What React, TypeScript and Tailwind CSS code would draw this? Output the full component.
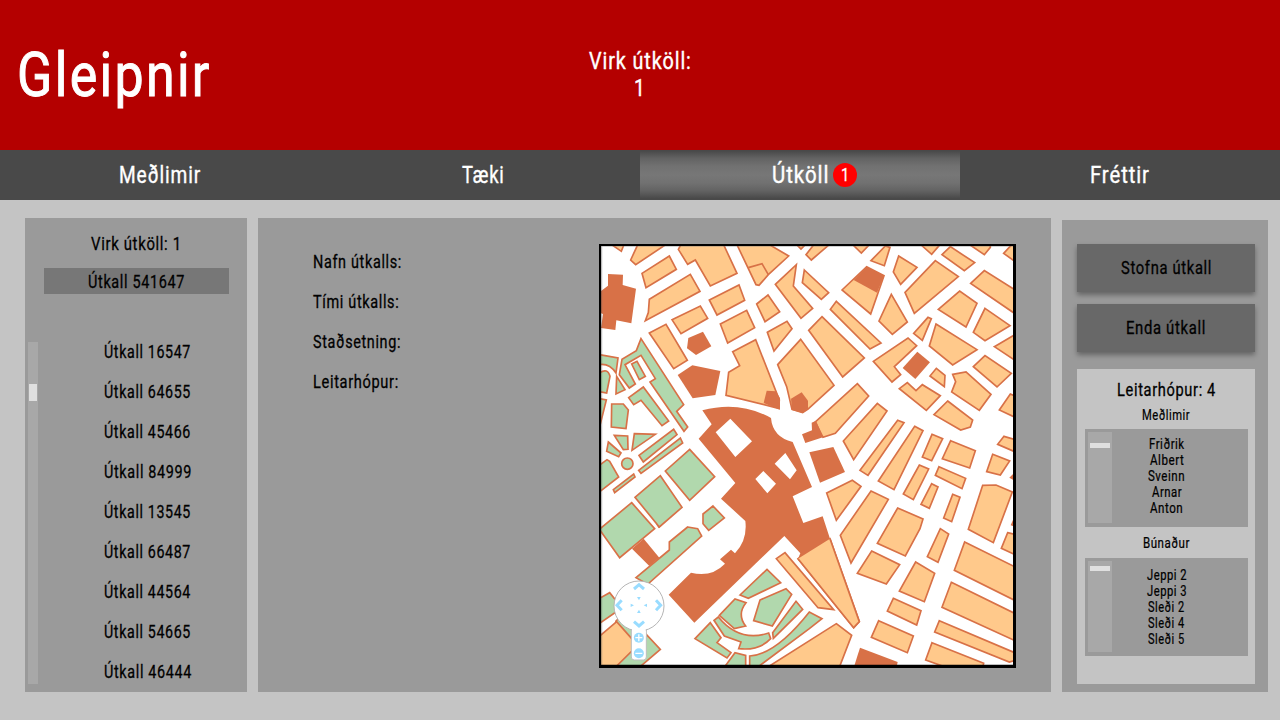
import { useLayoutEffect, useRef } from "react";

/** Condensed label: squeezes its text horizontally to a given width. */
function Label({ text, w, className = "" }: { text: string; w: number; className?: string }) {
  const ref = useRef<HTMLSpanElement>(null);
  useLayoutEffect(() => {
    const el = ref.current;
    if (el) el.style.transform = `scaleX(${w / el.offsetWidth})`;
  }, [text, w]);
  return (
    <span className={`inline-flex shrink-0 ${className}`} style={{ width: w }}>
      <span
        ref={ref}
        className="inline-block origin-left shrink-0 whitespace-pre tracking-[0.045em] [-webkit-text-stroke:0.016em_currentColor]"
      >
        {text}
      </span>
    </span>
  );
}

const calls: [string, number][] = [
  ["Útkall 16547", 87],
  ["Útkall 64655", 87],
  ["Útkall 45466", 87],
  ["Útkall 84999", 88],
  ["Útkall 13545", 87],
  ["Útkall 66487", 87],
  ["Útkall 44564", 87],
  ["Útkall 54665", 87],
  ["Útkall 46444", 88],
];

const fields: [string, number][] = [
  ["Nafn útkalls:", 89],
  ["Tími útkalls:", 86],
  ["Staðsetning:", 88],
  ["Leitarhópur:", 86],
];

const members: [string, number][] = [
  ["Friðrik", 36],
  ["Albert", 34],
  ["Sveinn", 37],
  ["Arnar", 30],
  ["Anton", 33],
];

const gear: [string, number][] = [
  ["Jeppi 2", 40],
  ["Jeppi 3", 40],
  ["Sleði 2", 37],
  ["Sleði 4", 37],
  ["Sleði 5", 37],
];

const P = ({ d, fill }: { d: string; fill?: string }) => <polygon points={d} fill={fill} />;

const orangeNW = [
  "38,8 76,34 86,8",
  "128,8 104,60 119,74 212,12",
  "138,100 220,48 241,88 150,143",
  "160,178 283,103 312,154 148,242 157,218",
  "247,28 258,8 380,8 423,100 343,138 298,60 275,73",
  "420,8 480,134 489,136 517,104 578,48 510,8",
  "340,180 429,135 446,181 363,225",
  "228,239 313,198 335,235 255,281",
  "160,279 210,253 274,361 233,386",
  "373,252 452,211 476,263 395,309",
  "482,192 516,165 551,215 507,245",
  "514,277 573,244 588,266 534,333",
  "538,133 601,74 592,138 650,205 615,235",
  "625,90 698,158 676,178 619,128",
  "598,10 615,27 632,10",
  "630,44 646,60 702,12 655,12",
  "545,374 614,298 714,436 636,507 620,518 588,508 572,440",
  "410,335 479,299 550,480 548,505 390,466 398,397 431,377",
];

const orangeNE = [
  "138,12 166,39 192,12",
  "195,62 238,18 252,22 235,77",
  "278,48 333,82 284,133 262,96",
  "388,62 457,110 325,220 297,157",
  "342,12 377,43 402,14",
  "408,44 433,20 506,68 475,92",
  "488,12 535,44 553,22 553,12",
  "593,40 615,16 640,4 640,74",
  "494,130 535,92 640,158 640,230",
  "397,208 461,153 513,190 480,261",
  "537,205 612,257 537,302 502,277",
  "565,320 640,276 640,370",
  "390,252 513,329 440,375 370,318",
  "502,380 537,347 616,400 573,441",
  "256,163 304,246 259,283 219,243",
  "366,232 376,236 349,301 323,280",
  "202,364 306,294 332,317 265,380 284,404 258,426",
  "391,385 417,406 415,440 372,408",
  "440,403 480,396 555,463 520,511 437,456 449,425",
  "91,184 225,309 192,327 73,208",
  "48,230 175,354 110,411 8,271",
  "108,150 182,80 234,107 194,222",
];

const orangeE = [
  "154,5 188,42 88,154 51,166 28,120",
  "214,64 243,87 143,233 112,177",
  "275,115 294,122 186,280 162,265",
  "326,133 351,146 264,323 217,297",
  "378,157 410,170 377,236 349,225",
  "434,176 508,206 491,258 409,230",
  "340,249 368,261 322,353 292,336",
  "399,254 479,289 468,320 388,280",
  "377,305 396,315 370,379 345,367",
  "440,337 462,346 437,419 413,408",
  "560,217 611,237 583,279 542,269",
  "594,163 640,177 640,215 575,187",
  "613,36 640,48 640,112 580,84",
  "425,57 500,114 493,135 464,144 384,98",
  "280,20 304,2 330,26 349,8 403,41 361,85",
  "530,310 570,309 619,330 562,482 487,442",
  "62,333 139,295 165,313 91,415",
  "195,327 247,352 135,543 103,460",
  "275,378 351,411 342,440 298,522 214,484",
];

const orangeSE = [
  "605,20 640,28 640,92 586,67",
  "197,75 281,116 241,174 154,142",
  "329,108 386,142 355,227 280,195",
  "262,217 345,254 332,297 244,255",
  "218,284 322,330 304,380 196,334",
  "403,8 428,24 396,109 364,92",
  "476,48 640,129 640,230 445,133",
  "436,169 640,269 640,350 408,244",
  "400,284 640,386 640,400 610,408 386,318",
  "378,350 533,412 530,424 420,424 359,402",
];

const orangeSW = [
  "702,38 790,287 773,305 606,98",
  "541,98 567,80 713,251 666,245",
  "721,293 767,328 730,424 514,424",
];

const greenW = [
  "98,47 142,15 218,117 198,131 135,55 113,68",
  "47,66 53,66 82,66 97,84 90,140 46,135",
  "55,160 95,162 96,202 82,203",
  "115,155 178,157 108,205",
  "37,180 75,213 68,224 32,208",
  "129,220 233,142 243,158 142,240",
  "128,265 253,168 260,183 135,274",
  "52,323 113,276 117,285 56,332",
  "10,250 33,233 41,238 68,285 10,330",
  "193,281 258,376 190,435 117,346",
  "281,202 356,284 281,355 208,267",
  "351,372 385,408 338,445 321,425 321,396",
  "107,362 176,440 71,527 10,442",
];

function StreetMap() {
  return (
    <svg width="417" height="424" viewBox="9 12 1251 1272" className="block">
      <rect x="9" y="12" width="1251" height="1272" fill="#fff" />
      <g stroke="#d87147" strokeWidth="5" fill="#ffc98b">
        <g>{orangeNW.map((d) => <P key={d} d={d} />)}</g>
        <path d="M457 83 498 71 517 104" fill="none" />
        <g transform="translate(630 0)">{orangeNE.map((d) => <P key={d} d={d} />)}</g>
        <g transform="translate(630 426)">{orangeE.map((d) => <P key={d} d={d} />)}</g>
        <g transform="translate(630 858)">{orangeSE.map((d) => <P key={d} d={d} />)}</g>
        <g transform="translate(0 858)">{orangeSW.map((d) => <P key={d} d={d} />)}</g>
      </g>
      <g fill="#d87147">
        <P d="36,102 81,104 80,135 120,146 106,250 61,241 58,270 15,264 21,222 15,220 15,153 36,137" />
        <P d="277,294 321,275 346,319 300,345 273,325" />
        <P d="245,405 289,376 373,393 358,465 290,475" />
        <P d="512,452 540,454 552,475 552,509 503,489" />
        <P d="585,476 617,457 636,482 636,508 620,519 588,510" />
        <g transform="translate(630 0)">
          <P d="334,335 372,367 328,417 290,384" />
          <P d="143,120 182,80 234,107 213,158" />
        </g>
        <g transform="translate(630 426)">
          <P d="-12,157 18,145 17,122 30,116 51,166 -2,183" />
          <P d="10,211 82,195 117,270 42,302" />
          <P d="610,287 632,265 632,300" />
          <P d="614,430 626,402 626,434" />
        </g>
        <g transform="translate(0 426)">
          <path
            fillRule="evenodd"
            d="M319 85Q430 55 525 108Q530 165 590 180L648 315 590 343 622 423 680 403 702 470 606 530 613 514 565 462 295 722 218 638 285 572Q345 588 387 545L372 532 405 503 417 514Q455 475 448 417L375 350 418 303 308 170 347 127ZM403 110 468 178 418 225 359 151ZM568 213 602 265 582 292 536 245ZM502 267 540 305 514 334 478 291Z"
          />
        </g>
        <P d="108,926 143,896 190,953 160,978" />
        <P d="792,1223 905,1266 902,1280 774,1280" />
        <P d="180,852 188,865 198,856" />
      </g>
      <P d="702,896 790,1145 773,1163 606,956" fill="#ffc98b" />
      <g fill="#b1d8ad" stroke="#d87147" strokeWidth="5">
        <g transform="translate(0 294)">
          <path d="M135 2 263 200 242 220 275 267 264 280 162 132 178 122 135 52 87 80 118 138 100 150 70 110 78 64 121 38Z" />
          <P d="107,78 123,70 148,115 130,125" />
          <P d="62,115 87,155 60,168" />
          <path d="M10 50 66 60 60 105Q40 75 10 80ZM10 105Q35 88 42 115L32 165 10 161ZM10 182 31 186 10 270Z" />
        </g>
        <g transform="translate(0 426)">
          {greenW.map((d) => <P key={d} d={d} />)}
          <circle cx="94" cy="245" r="17" />
        </g>
        <g transform="translate(0 858)">
          <P d="432,207 513,130 554,170 457,217" />
          <P d="492,222 570,188 587,205 529,300 473,284" />
          <P d="600,226 620,250 532,337 530,320" />
          <path d="M370 268 417 219 450 230Q422 265 449 300L415 308Z" />
          <path d="M354 283 367 273Q430 350 518 321L524 338Q490 375 428 368L435 348 385 330Z" />
          <P d="343,290 375,335 363,350 405,380 393,396 297,338" />
          <P d="385,424 417,380 449,388 449,424" />
          <path d="M461 424V390Q540 385 640 258L678 278 640 308 484 424Z" />
          <P d="275,3 305,8 317,30 155,175 120,155 220,72 220,48" />
          <P d="5,220 41,200 65,230 60,258 5,296" />
          <P d="60,285 88,258 193,370 130,424 40,424" />
          <P d="5,335 62,287 125,358 58,424 5,424" fill="#ffc98b" />
        </g>
        <path d="M702 896 790 1145 773 1163 606 956" fill="none" />
      </g>
      <g transform="translate(0 858)">
        <rect x="106" y="270" width="45" height="132" rx="9" fill="#fff" stroke="#bdbdbd" strokeWidth="3" />
        <circle cx="129" cy="240" r="75" fill="#fff" stroke="#b5b5b5" strokeWidth="3" />
        <path d="M108 290H149V330H108Z" fill="#fff" />
        <g fill="none" stroke="#99dcff" strokeWidth="9">
          <path d="M114 189 129 176 144 189M114 287 129 300 144 287M77 223 63 238 77 253M180 223 194 238 180 253" />
        </g>
        <g fill="#99dcff">
          <path d="M123 213H134L129 223ZM123 261H134L129 251ZM104 233V243L114 238ZM153 233V243L143 238Z" />
          <circle cx="128.500" cy="335" r="15" />
          <circle cx="128.500" cy="382" r="15" />
        </g>
        <path d="M118 335H139M128.500 324.500V345.500M118 382H139" stroke="#fff" strokeWidth="4" />
      </g>
      <path d="M17.500 18V1274M16 19.500H1252" stroke="#777" strokeWidth="2" opacity=".5" />
      <path d="M9 12H1260V1284H9ZM15.500 18V1274H1251V18Z" fill="#000" fillRule="evenodd" />
    </svg>
  );
}

function ListBox({ rows, className }: { rows: [string, number][]; className: string }) {
  return (
    <div className={`ml-2 flex w-[163px] bg-[#9a9a9a] pl-[3px] pt-[3px] ${className}`}>
      <div className="flex h-[91px] w-6 flex-col items-center bg-[#a8a8a8]">
        <div className={`h-[5px] w-5 bg-[#dfdfdf] ${rows === members ? "mt-[11px]" : "mt-[5px]"}`} />
      </div>
      <div className={`flex w-[109px] flex-col items-center text-[14px] leading-4 ${rows === members ? "pt-1" : "pt-[6px]"}`}>
        {rows.map(([t, w]) => (
          <Label key={t} text={t} w={w} />
        ))}
      </div>
    </div>
  );
}

export default function App() {
  return (
    <div className="flex h-[720px] w-[1280px] flex-col overflow-hidden bg-[#c4c4c4] font-['Roboto','Liberation_Sans',sans-serif] text-black">
      <header className="grid h-[150px] shrink-0 grid-cols-[540px_200px_1fr] bg-[#b40000] text-white">
        <h1 className="pl-[17px] pt-[37px] text-[62px] leading-[75px]">
          <Label text="Gleipnir" w={195} className="[-webkit-text-stroke:1.3px_white]" />
        </h1>
        <div className="flex flex-col items-center pt-12 text-2xl leading-[27px]">
          <Label text="Virk útköll:" w={103} />
          <Label text="1" w={12} />
        </div>
      </header>

      <nav className="grid h-[50px] shrink-0 grid-cols-4 bg-[#494949] text-2xl leading-[50px] text-white">
        <a className="flex justify-center">
          <Label text="Meðlimir" w={82} />
        </a>
        <a className="flex justify-center pl-[6px]">
          <Label text="Tæki" w={43} />
        </a>
        <a className="flex items-center bg-[linear-gradient(to_bottom,#494949_2%,#626262_16%,#717171_32%,#777_50%,#717171_66%,#626262_82%,#494949_97%)] pl-[132px]">
          <Label text="Útköll" w={57} />
          <span className="ml-1 flex size-6 items-center justify-center rounded-full bg-[#f00] text-lg leading-6">
            <Label text="1" w={9} />
          </span>
        </a>
        <a className="flex justify-center">
          <Label text="Fréttir" w={60} />
        </a>
      </nav>

      <main className="flex flex-1 items-start pl-[25px] pt-[18px] text-lg">
        <aside className="flex h-[474px] w-[222px] flex-col bg-[#9a9a9a]">
          <div className="flex h-[50px] items-center justify-center pt-[2px]">
            <Label text="Virk útköll: 1" w={91} />
          </div>
          <div className="ml-[19px] flex h-[26px] w-[185px] items-center justify-center bg-[#777] pt-[2px]">
            <Label text="Útkall 541647" w={97} />
          </div>
          <div className="mt-12 flex pl-[3px]">
            <div className="h-[342px] w-[10px] bg-[#a8a8a8] pl-px pt-[42px]">
              <div className="h-[17px] w-2 bg-[#dfdfdf]" />
            </div>
            <ul className="-mt-[10px] flex flex-col pl-[66px] leading-10">
              {calls.map(([t, w]) => (
                <li key={t} className="flex h-10">
                  <Label text={t} w={w} />
                </li>
              ))}
            </ul>
          </div>
        </aside>

        <section className="ml-[11px] flex h-[474px] w-[793px] bg-[#9a9a9a]">
          <div className="flex w-[341px] flex-col pl-[55px] pt-6 leading-10">
            {fields.map(([t, w]) => (
              <Label key={t} text={t} w={w} className="h-10" />
            ))}
          </div>
          <div className="pt-[26px]">
            <StreetMap />
          </div>
        </section>

        <aside className="ml-[11px] mt-[2px] flex h-[472px] w-[206px] flex-col bg-[#9a9a9a] pl-[15px] pt-6">
          <button className="flex h-12 w-[178px] items-center justify-center bg-[#686868] shadow-[0_3px_5px_rgba(0,0,0,0.35)]">
            <Label text="Stofna útkall" w={91} />
          </button>
          <button className="mt-3 flex h-12 w-[178px] items-center justify-center bg-[#686868] shadow-[0_3px_5px_rgba(0,0,0,0.35)]">
            <Label text="Enda útkall" w={80} />
          </button>
          <div className="mt-[17px] flex h-[315px] w-[178px] flex-col bg-[#c4c4c4] pt-2">
            <div className="flex h-[26px] items-center justify-center">
              <Label text="Leitarhópur: 4" w={99} />
            </div>
            <div className="flex h-[26px] items-center justify-center text-[14px]">
              <Label text="Meðlimir" w={48} />
            </div>
            <ListBox rows={members} className="h-[98px]" />
            <div className="flex h-[31px] items-center justify-center pt-[2px] text-[14px]">
              <Label text="Búnaður" w={47} />
            </div>
            <ListBox rows={gear} className="h-[98px]" />
          </div>
        </aside>
      </main>
    </div>
  );
}
